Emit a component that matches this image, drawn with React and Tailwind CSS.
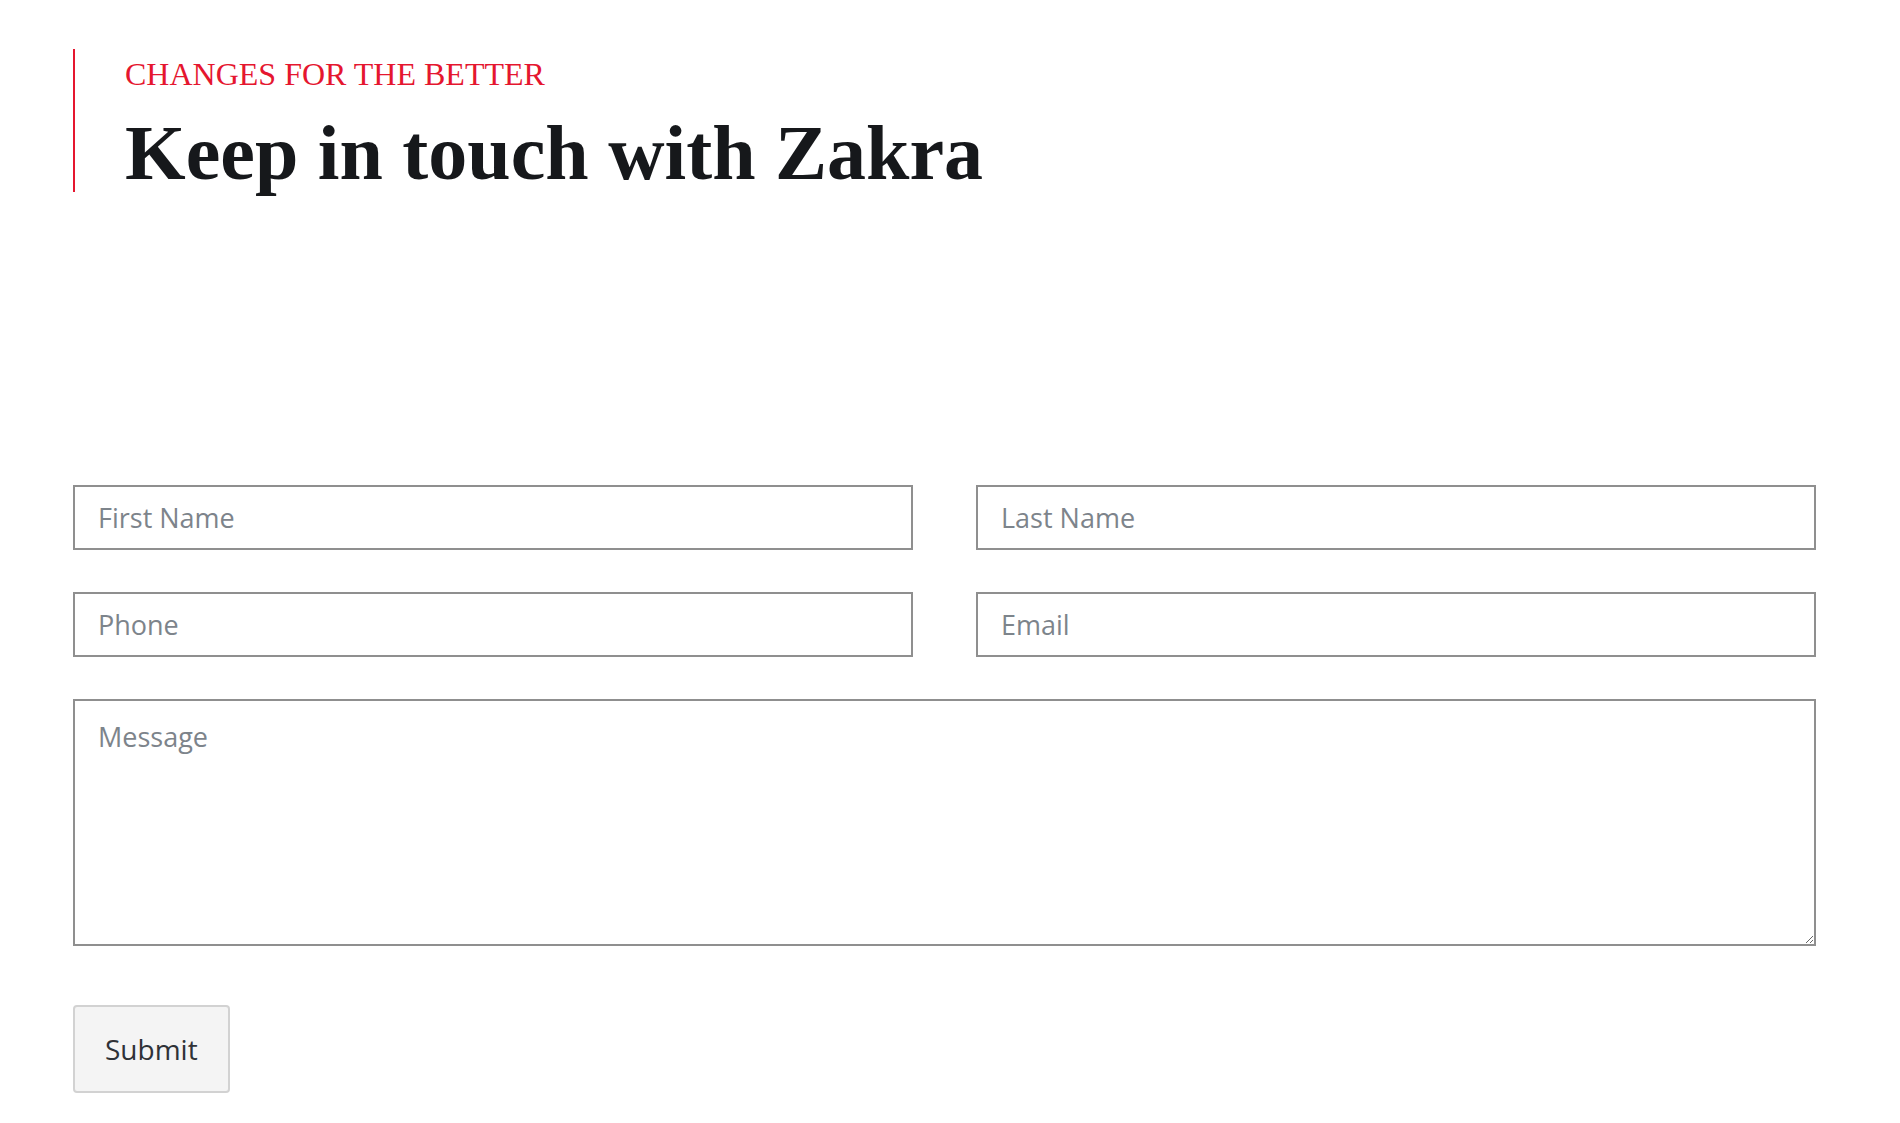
const inputCls =
  'h-[65px] w-full border-2 border-[#8f8f8f] bg-white px-[23px] text-[27px] text-[#333] placeholder:text-[#7d848b] outline-none';

export default function App() {
  return (
    <div className="min-h-screen bg-white pl-[73px] pr-[84px] pt-[49px]" style={{ fontFamily: '"Open Sans", sans-serif' }}>
      <div className="border-l-2 border-[#e5162f] pl-[50px] pt-[6px]" style={{ fontFamily: '"Liberation Serif", serif' }}>
        <p className="text-[32px] leading-[38px] text-[#e5162f]">CHANGES FOR THE BETTER</p>
        <h2 className="mt-[21px] text-[78px] font-bold leading-none text-[#16181b]">Keep in touch with Zakra</h2>
      </div>

      <form className="mt-[293px] flex flex-col gap-[42px]" onSubmit={(e) => e.preventDefault()}>
        <div className="grid grid-cols-2 gap-x-[63px]">
          <input className={inputCls} placeholder="First Name" />
          <input className={inputCls} placeholder="Last Name" />
        </div>
        <div className="grid grid-cols-2 gap-x-[63px]">
          <input className={inputCls} placeholder="Phone" />
          <input className={inputCls} placeholder="Email" />
        </div>
        <textarea
          className="h-[247px] w-full border-2 border-[#8f8f8f] bg-white px-[23px] py-[16px] text-[27px] text-[#333] placeholder:text-[#7d848b] outline-none"
          placeholder="Message"
        />
        <div className="mt-[17px]">
          <button
            type="submit"
            className="h-[88px] rounded-[4px] border-2 border-[#d2d2d2] bg-[#f4f4f4] px-[30px] text-[28px] text-[#2f3237]"
          >
            Submit
          </button>
        </div>
      </form>
    </div>
  );
}
